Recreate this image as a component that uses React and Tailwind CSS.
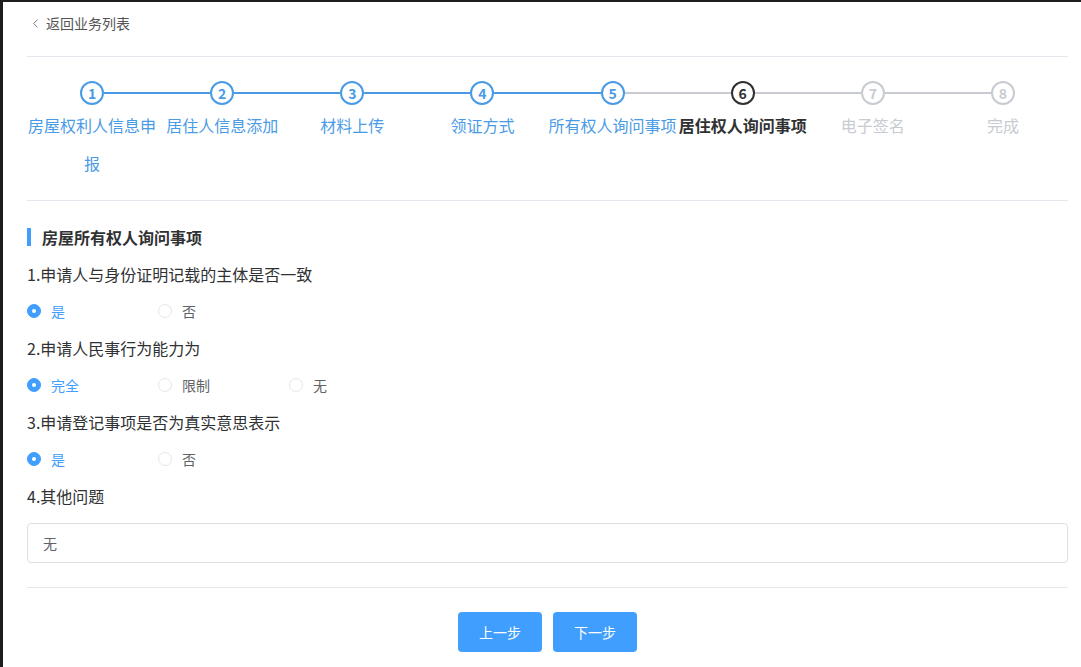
import React, { useState } from "react";
import { ChevronLeft } from "lucide-react";

const steps = [
  "房屋权利人信息申报",
  "居住人信息添加",
  "材料上传",
  "领证方式",
  "所有权人询问事项",
  "居住权人询问事项",
  "电子签名",
  "完成",
];

const current = 6;

function Step({ idx, label }) {
  const n = idx + 1;
  const done = n < current;
  const active = n === current;
  const circle = done
    ? "border-[#4a9be6] text-[#4a9be6]"
    : active
    ? "border-[#303133] text-[#303133]"
    : "border-[#c8cbd2] text-[#c8cbd2]";
  const text = done
    ? "text-[#4a9be6]"
    : active
    ? "text-[#303133] font-bold"
    : "text-[#c8cbd2]";
  const leftLine = n === 1 ? "bg-transparent" : n <= 5 ? "bg-[#4a9be6]" : "bg-[#c8cbd2]";
  const rightLine = n === 8 ? "bg-transparent" : n <= 4 ? "bg-[#4a9be6]" : "bg-[#c8cbd2]";
  return (
    <div className="flex flex-col items-center">
      <div className="flex w-full items-center">
        <div className={`h-[2px] flex-1 ${leftLine}`} />
        <div
          className={`flex h-[24px] w-[24px] items-center justify-center rounded-full border-2 bg-white text-[14px] font-bold leading-none ${circle}`}
        >
          {n}
        </div>
        <div className={`h-[2px] flex-1 ${rightLine}`} />
      </div>
      <div className={`mt-[1px] w-full text-center text-[16px] leading-[38px] ${text}`}>{label}</div>
    </div>
  );
}

function Radio({ options, value, onChange }) {
  return (
    <div className="mt-[15px] flex h-[22px] items-center">
      {options.map((o) => {
        const sel = o === value;
        return (
          <button
            key={o}
            onClick={() => onChange(o)}
            className="flex w-[131px] items-center text-left"
          >
            <span
              className={`flex h-[14px] w-[14px] items-center justify-center rounded-full border ${
                sel ? "border-[#409eff] bg-[#409eff]" : "border-[#e4e7ed] bg-white"
              }`}
            >
              {sel && <span className="h-[4px] w-[4px] rounded-full bg-white" />}
            </span>
            <span className={`ml-[10px] text-[14px] ${sel ? "text-[#409eff]" : "text-[#606266]"}`}>{o}</span>
          </button>
        );
      })}
    </div>
  );
}

export default function App() {
  const [a1, setA1] = useState("是");
  const [a2, setA2] = useState("完全");
  const [a3, setA3] = useState("是");
  const [other, setOther] = useState("无");

  return (
    <div
      className="h-[667px] w-full overflow-hidden border-l-[3px] border-t-2 border-[#1e1e1e] bg-white pl-[24px] pr-[13px] text-[#303133]"
      style={{ fontFamily: '"Noto Sans CJK SC", "Noto Sans", sans-serif' }}
    >
      {/* back link */}
      <div className="mt-[10px] flex h-[22px] items-center text-[14px] text-[#555]">
        <ChevronLeft className="ml-[1px] h-[15px] w-[15px] text-[#777]" strokeWidth={1.5} />
        <span className="ml-[3px]">返回业务列表</span>
      </div>
      <div className="mt-[22px] h-px bg-[#e4e7ed]" />

      {/* steps */}
      <div className="mt-[24px] grid grid-cols-8">
        {steps.map((s, i) => (
          <Step key={s} idx={i} label={s} />
        ))}
      </div>
      <div className="mt-[18px] h-px bg-[#e4e7ed]" />

      {/* form */}
      <div className="mt-[25px] flex h-[22px] items-center">
        <div className="h-[18px] w-[4px] bg-[#409eff]" />
        <div className="ml-[11px] text-[16px] font-bold">房屋所有权人询问事项</div>
      </div>

      <div className="mt-[15px] text-[16px] leading-[22px]">1.申请人与身份证明记载的主体是否一致</div>
      <Radio options={["是", "否"]} value={a1} onChange={setA1} />

      <div className="mt-[15px] text-[16px] leading-[22px]">2.申请人民事行为能力为</div>
      <Radio options={["完全", "限制", "无"]} value={a2} onChange={setA2} />

      <div className="mt-[15px] text-[16px] leading-[22px]">3.申请登记事项是否为真实意思表示</div>
      <Radio options={["是", "否"]} value={a3} onChange={setA3} />

      <div className="mt-[15px] text-[16px] leading-[22px]">4.其他问题</div>
      <input
        value={other}
        onChange={(e) => setOther(e.target.value)}
        className="mt-[16px] h-[40px] w-full rounded-[4px] border border-[#dcdfe6] px-[15px] text-[14px] text-[#606266] outline-none"
      />

      <div className="mt-[24px] h-px bg-[#e4e7ed]" />

      <div className="mt-[24px] flex justify-center gap-[11px]">
        <button className="h-[40px] w-[84px] rounded-[4px] bg-[#409eff] text-[14px] text-white">上一步</button>
        <button className="h-[40px] w-[84px] rounded-[4px] bg-[#409eff] text-[14px] text-white">下一步</button>
      </div>
    </div>
  );
}
